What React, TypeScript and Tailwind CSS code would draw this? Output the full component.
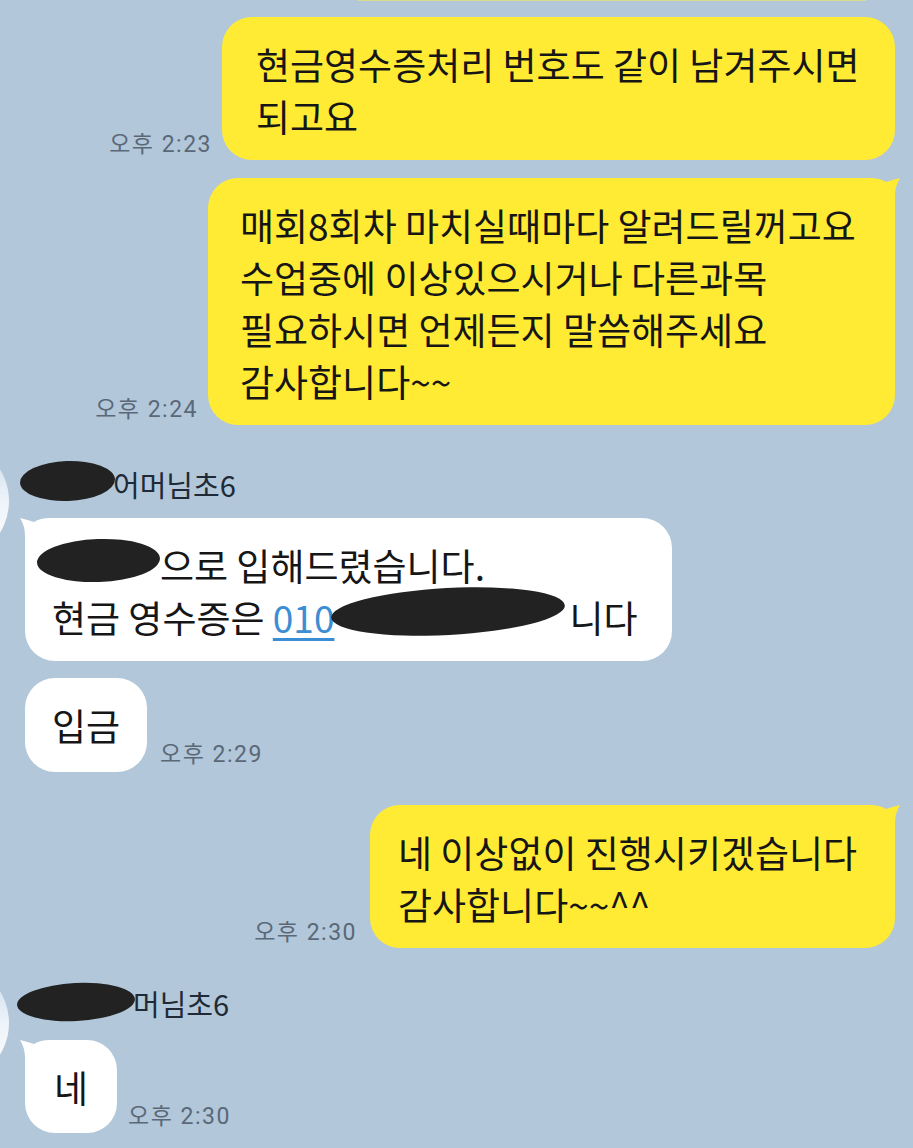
import React from 'react';

type Side = 'me' | 'other';

// 말풍선 꼬리 (첫 메시지에만)
function Tail({ side }: { side: Side }) {
  const fill = side === 'me' ? '#ffeb33' : '#ffffff';
  return (
    <svg
      width="36"
      height="32"
      viewBox="0 0 36 32"
      className={`absolute top-0 ${side === 'me' ? 'right-[-5px]' : 'left-[-5px] -scale-x-100'}`}
    >
      <path d="M0 0 L6 0 Q16 0 22 4 Q28 2 36 0 Q31 8 31 18 L31 32 L0 32 Z" fill={fill} />
    </svg>
  );
}

function Bubble({
  side,
  tail = false,
  className = '',
  children,
}: {
  side: Side;
  tail?: boolean;
  className?: string;
  children: React.ReactNode;
}) {
  return (
    <div
      className={`relative shrink-0 rounded-[30px] text-[37px] leading-[52px] text-[#161616] whitespace-nowrap ${
        side === 'me' ? 'bg-[#ffeb33]' : 'bg-white'
      } ${className}`}
    >
      {tail && <Tail side={side} />}
      <div className="relative">{children}</div>
    </div>
  );
}

function Time({ children, className = '' }: { children: React.ReactNode; className?: string }) {
  return (
    <span
      className={`shrink-0 text-[23px] leading-[24px] tracking-[1.5px] text-[#5a6878] font-['Roboto','Noto_Sans_CJK_KR',sans-serif] ${className}`}
    >
      {children}
    </span>
  );
}

function Avatar({ className = '' }: { className?: string }) {
  return (
    <div
      className={`w-[120px] h-[120px] -ml-[111px] shrink-0 rounded-full bg-linear-to-b from-[#c6d7e8] via-[#eef4fa] to-white ${className}`}
    />
  );
}

function Scribble({ className = '' }: { className?: string }) {
  return <span className={`inline-block shrink-0 rounded-[50%] bg-[#222222] ${className}`} />;
}

export default function App() {
  return (
    <div className="w-[913px] h-[1148px] overflow-hidden bg-[#b2c7d9] font-['Noto_Sans_CJK_KR','Noto_Sans',sans-serif]">
      {/* 위쪽 잘린 말풍선 */}
      <div className="h-[1px] ml-[358px] w-[508px] bg-[#dcdc8e]" />

      {/* 내 메시지 */}
      <div className="flex justify-end items-end gap-[10px] pr-[18px] mt-[16px]">
        <Time className="mb-[3px]">오후 2:23</Time>
        <Bubble side="me" className="w-[673px] pl-[34px] pt-[21px] pb-[18px]">
          현금영수증처리 번호도 같이 남겨주시면
          <br />
          되고요
        </Bubble>
      </div>

      <div className="flex justify-end items-end gap-[10px] pr-[18px] mt-[18px]">
        <Time className="mb-[3px]">오후 2:24</Time>
        <Bubble side="me" tail className="w-[687px] pl-[32px] pt-[21px] pb-[18px]">
          매회8회차 마치실때마다 알려드릴꺼고요
          <br />
          수업중에 이상있으시거나 다른과목
          <br />
          필요하시면 언제든지 말씀해주세요
          <br />
          감사합니다~~
        </Bubble>
      </div>

      {/* 상대방 메시지 */}
      <div className="flex items-start mt-[43px]">
        <Avatar className="-mt-[27px]" />
        <div className="flex flex-col ml-[11px]">
          <div className="h-[34px] flex items-center text-[29px] text-[#1f2a36]">
            <Scribble className="w-[95px] h-[40px] -translate-y-[4px] -rotate-[2deg]" />
            <span className="-ml-[2px]">어머님초6</span>
          </div>

          <div className="flex mt-[16px] ml-[5px]">
            <Bubble side="other" tail className="w-[647px] pl-[27px] pt-[21px] pb-[18px]">
              <Scribble className="w-[123px] h-[43px] -ml-[15px] align-top -rotate-[2deg]" />
              으로 입해드렸습니다.
              <br />
              현금 영수증은{' '}
              <span className="text-[#3b8ed4] underline decoration-[#3b8ed4] underline-offset-[5px]">010</span>
              <Scribble className="w-[234px] h-[47px] -ml-[3px] -mt-[3px] align-top -rotate-[3deg]" />
              <span className="ml-[4px]">니다</span>
            </Bubble>
          </div>

          <div className="flex items-end gap-[13px] mt-[17px] ml-[5px]">
            <Bubble side="other" className="w-[122px] text-center pt-[21px] pb-[21px]">
              입금
            </Bubble>
            <Time className="mb-[5px]">오후 2:29</Time>
          </div>
        </div>
      </div>

      <div className="flex justify-end items-end gap-[13px] pr-[18px] mt-[33px]">
        <Time className="mb-[3px]">오후 2:30</Time>
        <Bubble side="me" tail className="w-[525px] pl-[28px] pt-[21px] pb-[18px]">
          네 이상없이 진행시키겠습니다
          <br />
          감사합니다~~^^
        </Bubble>
      </div>

      <div className="flex items-start mt-[39px]">
        <Avatar className="-mt-[24px]" />
        <div className="flex flex-col ml-[11px]">
          <div className="h-[34px] flex items-center text-[29px] text-[#1f2a36]">
            <Scribble className="w-[118px] h-[38px] -ml-[3px] -translate-y-[2px] -rotate-[3deg]" />
            <span className="-ml-[2px]">머님초6</span>
          </div>

          <div className="flex items-end gap-[11px] mt-[19px] ml-[5px]">
            <Bubble side="other" tail className="w-[92px] text-center pt-[21px] pb-[20px]">
              네
            </Bubble>
            <Time className="mb-[4px]">오후 2:30</Time>
          </div>
        </div>
      </div>
    </div>
  );
}
